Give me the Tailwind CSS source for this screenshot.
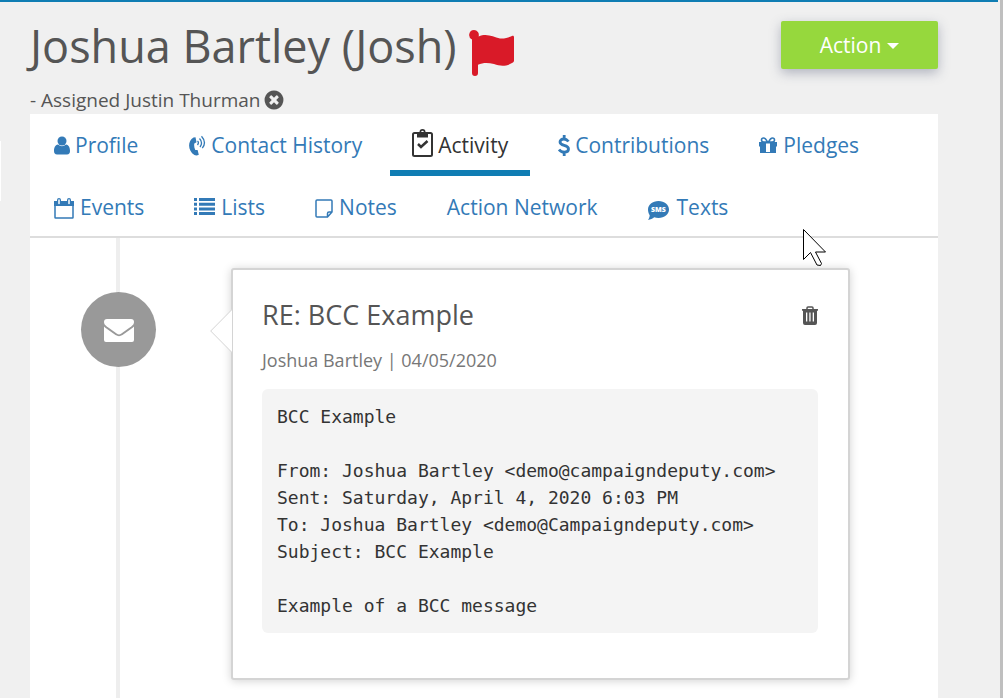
<!DOCTYPE html>
<html lang="en">
<head>
    <meta charset="UTF-8">
    <meta name="viewport" content="width=device-width, initial-scale=1.0">
    <title>Joshua Bartley (Josh) - Activity</title>
    <script src="https://cdn.jsdelivr.net/npm/@tailwindcss/browser@4"></script>
</head>
<body class="relative flex min-h-screen flex-col border-r-3 border-[#bfbfbf] bg-[#f0f0f0] font-['Open_Sans',sans-serif] text-[#555]">
    <div class="mr-0.5 h-0.5 shrink-0 bg-[#0f7db3]"></div>
    <!-- edge of the collapsed sidebar -->
    <div class="absolute left-0 top-[141px] h-[60px] w-px bg-white"></div>

    <div class="flex grow flex-col pl-[30px] pr-[62px]">
        <header class="flex h-28 items-start justify-between">
            <div>
                <h1 class="mt-3.5 flex items-center gap-3 text-[45px] leading-[60px]">
                    Joshua Bartley (Josh)
                    <svg class="mt-3.5 h-[46px] w-[46px]" viewBox="0 0 46 46" fill="#d91a28"><path d="M5 0a5 5 0 0 1 4.600 6.500C18 3 24 7 31 8.500c5 .5 9-1.500 12-2.500 1.500-.5 2 .3 2 1.500v23c0 1.200-.6 1.900-2 2.600-7 4-12 3-18 1-6-1.500-11-1.500-16 .6V43a2.800 2.800 0 0 1-6 0V9.500A5 5 0 0 1 5 0z"/></svg>
                </h1>
                <p class="mt-3 flex items-center gap-[3px] text-[19px] leading-6">
                    - Assigned Justin Thurman
                    <button type="button" aria-label="Remove assignment">
                        <svg class="h-[22px] w-[22px]" viewBox="0 0 1792 1792" fill="currentColor"><path d="M1277 1122q0-26-19-45l-181-181 181-181q19-19 19-45 0-27-19-46l-90-90q-19-19-46-19-26 0-45 19l-181 181-181-181q-19-19-45-19-27 0-46 19l-90 90q-19 19-19 46 0 26 19 45l181 181-181 181q-19 19-19 45 0 27 19 46l90 90q19 19 46 19 26 0 45-19l181-181 181 181q19 19 45 19 27 0 46-19l90-90q19-19 19-46zm387-226q0 209-103 385.500t-279.500 279.500-385.500 103-385.500-103-279.500-279.500-103-385.500 103-385.500 279.500-279.500 385.500-103 385.500 103 279.500 279.500 103 385.500z"/></svg>
                    </button>
                </p>
            </div>
            <button type="button" class="mt-[19px] flex h-12 w-[157px] items-center justify-center gap-1.5 rounded-xs bg-[#96d83d] pt-0.5 text-[21px] text-white shadow-[0_4px_12px_rgba(60,70,100,0.35)]">
                Action
                <svg class="h-1.5 w-3" viewBox="0 0 12 6" fill="currentColor"><path d="M0 0h12L6 6z"/></svg>
            </button>
        </header>

        <main class="flex grow flex-col bg-white">
            <nav class="flex flex-wrap gap-x-1.5 border-b-2 border-[#ddd] pl-0.5 text-[21px] text-[#337ab7]">
                <a href="#" class="flex h-[62px] items-center gap-[5px] border-b-6 border-transparent px-[22px] pt-2">
                    <svg class="mb-0.5 h-[19px] w-4" viewBox="0 0 16 19" fill="currentColor"><circle cx="8" cy="5" r="4.500"/><path d="M4 8.500q4 3.500 8 0c3 .3 4 3.500 4 6.500 0 2-1 3.500-3 3.500H3c-2 0-3-1.500-3-3.500 0-3 1-6.200 4-6.500z"/></svg>
                    Profile
                </a>
                <a href="#" class="flex h-[62px] items-center gap-[5px] border-b-6 border-transparent px-[22px] pt-2">
                    <svg class="mb-0.5 h-[21px] w-[18px]" viewBox="0 0 18 21" fill="none" stroke="currentColor"><path fill="currentColor" stroke="none" d="M5.500 2.600 7.500 2.300l1 5-2.200 1.200c-.4 2.400 0 4.600 1 6.600l2.300-.2 1.200 4.900c-1.300.7-2.900.9-4.400.3C0 16-1 6.500 5.500 2.600z"/><path d="M9.500 6q1.800 1.500 0 4M11.500 3.500q3.800 4 .5 8.500M13.500 1.200q5.500 6 .8 12" stroke-width="1.300"/></svg>
                    Contact History
                </a>
                <a href="#" aria-current="page" class="flex h-[62px] items-center gap-[5px] border-b-6 border-[#0f7db3] px-[22px] pt-2 text-[#333]">
                    <svg class="mb-1.5 h-7 w-[21px]" viewBox="0 0 21 28"><rect x="1" y="4" width="19" height="23" rx="1.500" fill="none" stroke="currentColor" stroke-width="2"/><path fill="currentColor" fill-rule="evenodd" d="M5 3h2.500a3 3 0 0 1 6 0H16v5.500H5zM10.500 1.800a1.300 1.300 0 1 0 0 2.600 1.300 1.300 0 0 0 0-2.600z"/><path d="m6 15 3 3 6.500-6" fill="none" stroke="currentColor" stroke-width="2.500"/></svg>
                    Activity
                </a>
                <a href="#" class="flex h-[62px] items-center gap-[5px] border-b-6 border-transparent px-[22px] pt-2">
                    <svg class="mb-0.5 h-[21px] w-3" viewBox="0 0 12 21" fill="none" stroke="currentColor" stroke-width="2.800"><path d="M10.500 6.500C9 4.600 7.500 4 5.800 4 3.500 4 2 5.200 2 7c0 4.500 8.500 2.300 8.500 7 0 2-1.800 3.200-4.200 3.200-2 0-4-.8-5.300-2.700M6.200 0v4M6.200 17v4"/></svg>
                    Contributions
                </a>
                <a href="#" class="flex h-[62px] items-center gap-1.5 border-b-6 border-transparent px-[22px] pt-2">
                    <svg class="mb-0.5 h-[17px] w-[18px]" viewBox="0 0 18 17" fill="currentColor"><path fill-rule="evenodd" d="M0 5h18v4.500h-1V16H1V9.500H0zM7 6.500V15h4V6.500z"/><path d="M8.500 5C7 2 6 1 4.600 1S2.500 2 2.500 3s1 2 2.500 2zM9.500 5C11 2 12 1 13.400 1s2.100 1 2.100 2-1 2-2.500 2z" fill="none" stroke="currentColor" stroke-width="1.600"/></svg>
                    Pledges
                </a>
                <a href="#" class="flex h-[60px] items-center gap-1.5 px-[22px] pt-1">
                    <svg class="h-[21px] w-5" viewBox="0 0 20 21"><path d="M1 4h18v15.500q0 .5-.5.5h-17q-.5 0-.5-.5z" fill="none" stroke="currentColor" stroke-width="1.500"/><path fill="currentColor" d="M0 3h20v5H0z"/><path d="M5 2v3.500M15 2v3.500" stroke="currentColor" stroke-width="4" stroke-linecap="round"/><path d="M5 2v3.500M15 2v3.500" stroke="#fff" stroke-width="1.500" stroke-linecap="round"/></svg>
                    Events
                </a>
                <a href="#" class="flex h-[60px] items-center gap-1.5 px-[22px] pt-1">
                    <svg class="mb-1 h-[17px] w-[21px]" viewBox="0 0 21 17" fill="currentColor"><path d="M0 0h3v3H0zM5 0h16v3H5zM0 4.700h3v3H0zM5 4.700h16v3H5zM0 9.400h3v3H0zM5 9.400h16v3H5zM0 14h3v3H0zM5 14h16v3H5z"/></svg>
                    Lists
                </a>
                <a href="#" class="flex h-[60px] items-center gap-1.5 px-[22px] pt-1">
                    <svg class="h-[19px] w-[18px]" viewBox="0 0 18 19" fill="none" stroke="currentColor" stroke-width="1.500"><path d="M2 1h14q1 0 1 1v11l-4.500 5H2q-1 0-1-1V2q0-1 1-1zM12.500 18v-3.500q0-1.500 1.500-1.500h3"/></svg>
                    Notes
                </a>
                <a href="#" class="flex h-[60px] items-center px-[22px] pt-1">Action Network</a>
                <a href="#" class="flex h-[60px] items-center gap-2 px-[22px] pt-1">
                    <svg class="mt-1 h-[19px] w-[21px]" viewBox="0 0 21 19"><path fill="currentColor" d="M10.500 0C16.500 0 21 3.800 21 8.500S16.500 17 10.500 17c-1.500 0-3-.3-4.300-.7C4.500 17.800 2.500 18.700 0 19c1-1.300 1.600-2.800 1.700-4.700C.6 12.700 0 10.700 0 8.500 0 3.800 4.500 0 10.500 0z"/><text x="10.500" y="11" text-anchor="middle" fill="#fff" font-family="Open Sans, sans-serif" font-size="7" font-weight="800">SMS</text></svg>
                    Texts
                </a>
            </nav>

            <section class="relative flex grow items-start pb-[18px] pl-[51px] pr-[88px] pt-[30px]">
                <!-- timeline rail -->
                <div class="absolute bottom-0 left-[86px] top-0 w-1 bg-[#eee]"></div>
                <div class="relative mt-6 flex size-[75px] shrink-0 items-center justify-center rounded-full bg-[#999]">
                    <svg class="mt-0.5 h-[23px] w-[30px]" viewBox="0 0 30 23" fill="#fff"><path d="M3 0h24q3 0 3 3c0 2-1 3-2.500 4.200L17 14.800q-2 1.400-4 0L2.500 7.200C1 6 0 5 0 3q0-3 3-3z"/><path d="M0 7.500q1 1 2 1.700l9.500 6.800q3.500 2.300 7 0L28 9.200q1-.7 2-1.700V21q0 2-2 2H2q-2 0-2-2z"/></svg>
                </div>
                <article class="relative ml-[75px] grow rounded-[3px] border-2 border-[#d4d4d4] bg-white pb-[45px] pl-[29px] pr-[30px] pt-[27px] shadow-[0_1px_10px_rgba(0,0,0,0.18)]">
                    <svg class="absolute -left-[23px] top-[39px] h-11 w-[22px]" viewBox="0 0 22 44"><path d="M22 .5.700 22 22 43.500" fill="#fff" stroke="#d4d4d4"/></svg>
                    <div class="flex items-center justify-between">
                        <h2 class="text-[27px] leading-9">RE: BCC Example</h2>
                        <button type="button" aria-label="Delete activity">
                            <svg class="h-[19px] w-4" viewBox="0 0 16 19"><path d="M5 3V2q0-1 1-1h4q1 0 1 1v1" fill="none" stroke="currentColor" stroke-width="1.500"/><path fill="currentColor" fill-rule="evenodd" d="M0 3h16v1.800h-1V17q0 2-2 2H3q-2 0-2-2V4.800H0zM4 6.500v9h1.300v-9zM7.300 6.500v9h1.300v-9zM10.700 6.500v9H12v-9z"/></svg>
                        </button>
                    </div>
                    <p class="mt-[13px] text-lg leading-7 text-[#777]">Joshua Bartley | 04/05/2020</p>
                    <pre class="mt-[15px] rounded-md bg-[#f4f4f4] px-[15px] py-3.5 font-['DejaVu_Sans_Mono',monospace] text-lg leading-[27px] text-[#333]">BCC Example

From: Joshua Bartley &lt;demo@campaigndeputy.com&gt;
Sent: Saturday, April 4, 2020 6:03 PM
To: Joshua Bartley &lt;demo@Campaigndeputy.com&gt;
Subject: BCC Example

Example of a BCC message</pre>
                </article>
            </section>
        </main>
    </div>

    <!-- mouse pointer -->
    <svg class="pointer-events-none absolute left-[803px] top-[229px] h-[38px] w-6" viewBox="0 0 24 38"><path d="M.5.500v30l7-7L14 36l3.500.5 1-2L12.500 23h10z" fill="#fff" stroke="#000"/></svg>
</body>
</html>
